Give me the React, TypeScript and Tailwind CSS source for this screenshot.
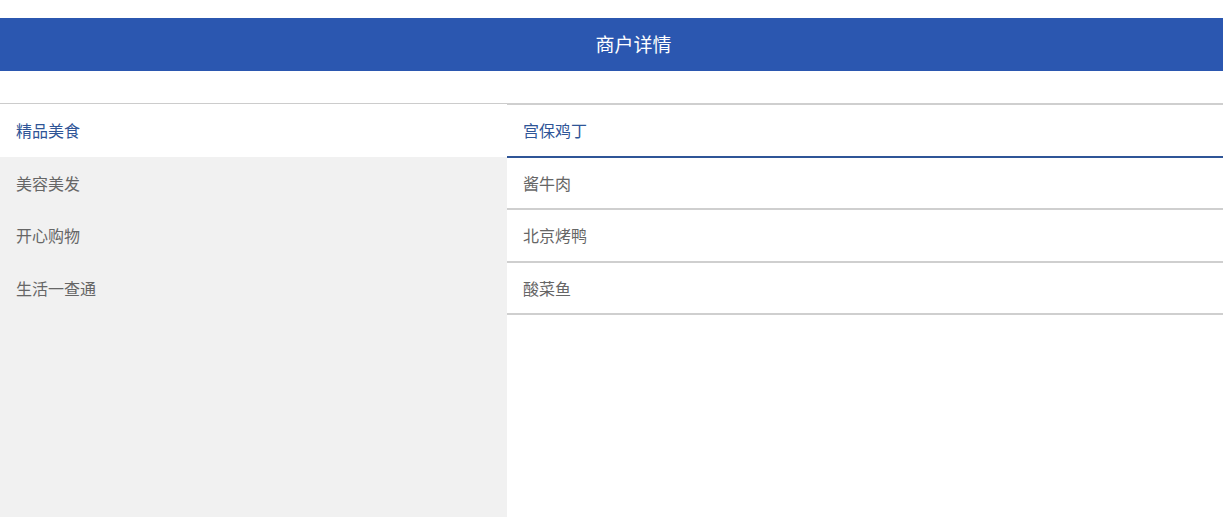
const categories = ['精品美食', '美容美发', '开心购物', '生活一查通']
const dishes = ['宫保鸡丁', '酱牛肉', '北京烤鸭', '酸菜鱼']

export default function App() {
  const active = 0
  return (
    <div
      className="w-full h-[517px] bg-white overflow-hidden"
      style={{ fontFamily: '"Microsoft YaHei", "Noto Sans CJK SC", sans-serif' }}>
      <header className="mt-[18px] h-[53px] bg-[#2b57b0] flex items-center justify-center pl-[44px] text-white text-[19px]">
        商户详情
      </header>
      <div className="mt-8 flex h-[414px]">
        <ul className="w-[507px] bg-[#f1f1f1] border-t border-[#cccccc]">
          {categories.map((name, i) => (
            <li
              key={name}
              className={
                i === active
                  ? 'h-[52.5px] flex items-center px-4 text-base bg-white text-[#2f5597]'
                  : 'h-[52.5px] flex items-center px-4 text-base text-[#666666]'
              }>
              {name}
            </li>
          ))}
        </ul>
        <ul className="flex-1 border-t-2 border-[#cfcfcf]">
          {dishes.map((name, i) => (
            <li
              key={name}
              className={
                i === active
                  ? 'h-[52.5px] flex items-center px-4 text-base border-b-2 border-[#2f5597] text-[#2f5597]'
                  : 'h-[52.5px] flex items-center px-4 text-base border-b-2 border-[#cfcfcf] text-[#666666]'
              }>
              {name}
            </li>
          ))}
        </ul>
      </div>
    </div>
  )
}
